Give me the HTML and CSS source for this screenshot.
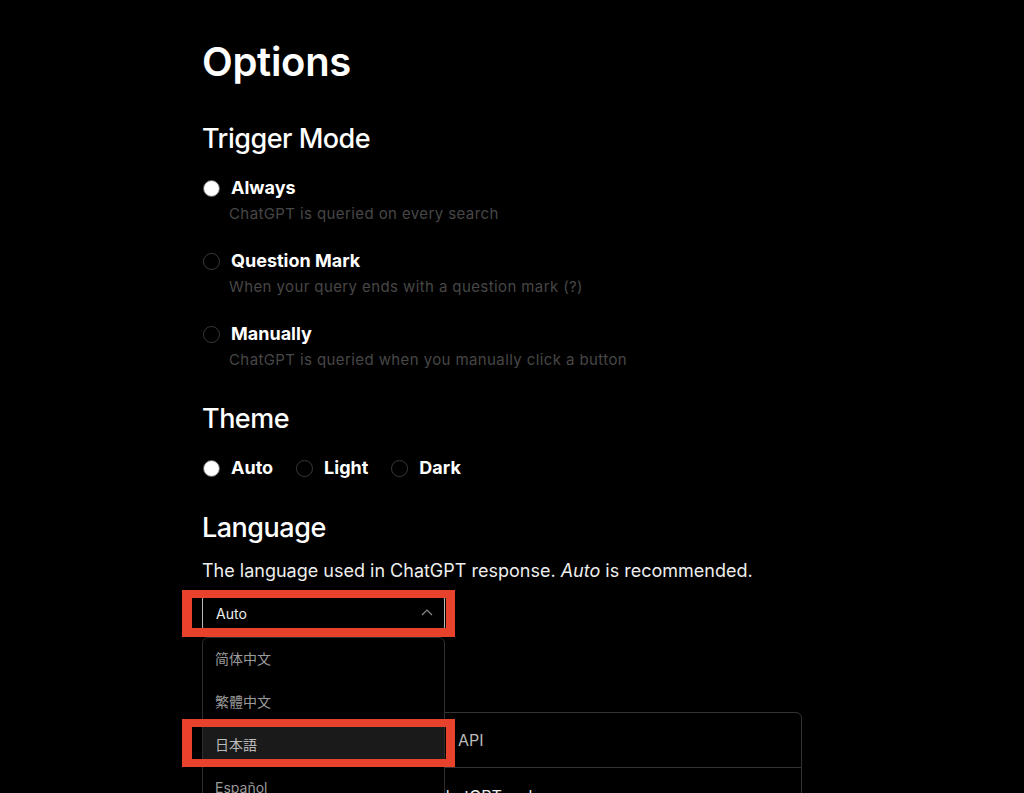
FILE: index.html
```html
<!DOCTYPE html>
<html>
<head>
    <title>Options</title>
    <link rel="stylesheet" href="styles.css">
</head>
<body>
    <div class="container">
        <h1>Options</h1>

        <h2>Trigger Mode</h2>
        <div class="option-list">
            <div class="option">
                <label class="radio"><span class="dot checked"></span>Always</label>
                <p class="hint">ChatGPT is queried on every search</p>
            </div>
            <div class="option">
                <label class="radio"><span class="dot"></span>Question Mark</label>
                <p class="hint">When your query ends with a question mark (?)</p>
            </div>
            <div class="option">
                <label class="radio"><span class="dot"></span>Manually</label>
                <p class="hint">ChatGPT is queried when you manually click a button</p>
            </div>
        </div>

        <h2>Theme</h2>
        <div class="theme-row">
            <label class="radio"><span class="dot checked"></span>Auto</label>
            <label class="radio"><span class="dot"></span>Light</label>
            <label class="radio"><span class="dot"></span>Dark</label>
        </div>

        <h2>Language</h2>
        <p class="lead">The language used in ChatGPT response. <i>Auto</i> is recommended.</p>

        <div class="select-wrap">
            <div class="select">
                <span>Auto</span>
                <svg class="chevron" width="14" height="14" viewBox="0 0 14 14">
                    <path d="M2 9 L7 4 L12 9" fill="none" stroke="#8a8a8a" stroke-width="1.2"/>
                </svg>
            </div>
            <div class="mark mark-select"></div>
            <ul class="dropdown">
                <li>简体中文</li>
                <li>繁體中文</li>
                <li class="active">日本語</li>
                <li>Español</li>
                <li>Français</li>
            </ul>
            <div class="mark mark-item"></div>
        </div>

        <div class="card">
            <div class="card-tabs">
                <span>ChatGPT webapp</span>
                <span>API</span>
            </div>
            <div class="card-row">
                <span class="card-key">Provider</span>
                <span>ChatGPT webapp</span>
            </div>
        </div>
    </div>
</body>
</html>
```

FILE: styles.css
```css
body {
    margin: 0;
    background-color: #000;
    color: #fff;
    font-family: 'Inter', 'Noto Sans CJK JP', sans-serif;
    overflow: hidden;
}
.container {
    width: 600px;
    margin-left: 202px;
    padding-top: 38px;
}
h1 {
    font-size: 40px;
    line-height: 48px;
    font-weight: 600;
    margin: 0 0 36px 0;
    letter-spacing: -0.3px;
}
h2 {
    font-size: 27px;
    line-height: 34px;
    font-weight: 500;
    margin: 0 0 20px 0;
    letter-spacing: -0.5px;
}
.option-list {
    display: flex;
    flex-direction: column;
    gap: 25px;
    margin-bottom: 32px;
}
.option {
    display: flex;
    flex-direction: column;
    gap: 4px;
}
.radio {
    display: flex;
    align-items: center;
    gap: 11px;
    font-size: 18px;
    line-height: 24px;
    font-weight: 700;
    padding-left: 1px;
}
.dot {
    width: 15px;
    height: 15px;
    border: 1px solid #3a3a3a;
    border-radius: 50%;
    box-sizing: content-box;
}
.dot.checked {
    background-color: #fff;
    border-color: #555;
}
.hint {
    margin: 0;
    padding-left: 27px;
    font-size: 15px;
    line-height: 20px;
    letter-spacing: 0.4px;
    color: #474747;
}
.theme-row {
    display: flex;
    gap: 22px;
    margin-bottom: 31px;
}
.lead {
    margin: -6px 0 13px 0;
    font-size: 18px;
    line-height: 24px;
    color: #eee;
}
.select-wrap {
    position: relative;
    width: 243px;
}
.select {
    height: 34px;
    box-sizing: border-box;
    border: 1px solid #bbb;
    border-radius: 3px;
    display: flex;
    align-items: center;
    justify-content: space-between;
    padding: 0 10px 0 13px;
    font-size: 14px;
    color: #eee;
}
.dropdown {
    position: absolute;
    top: 41px;
    left: 0;
    width: 243px;
    box-sizing: border-box;
    margin: 0;
    padding: 0;
    list-style: none;
    border: 1px solid #2e2e2e;
    border-radius: 6px;
    background-color: #000;
    z-index: 2;
}
.dropdown li {
    height: 43px;
    box-sizing: border-box;
    display: flex;
    align-items: center;
    padding: 0 0 3px 12px;
    font-size: 14px;
    color: #9a9a9a;
}
.dropdown li.active {
    background-color: #1a1a1a;
    color: #bbb;
}
.mark {
    position: absolute;
    left: -20px;
    width: 254px;
    height: 32px;
    border-style: solid;
    border-color: #e8412c;
    border-width: 8px 9px 8px 10px;
    z-index: 3;
}
.mark-select {
    top: -6px;
    height: 30px;
    border-bottom-width: 9px;
}
.mark-item {
    top: 123px;
}
.card {
    margin-top: 82px;
    border: 1px solid #333;
    border-radius: 6px;
}
.card-tabs {
    height: 54px;
    display: flex;
    align-items: center;
    gap: 106px;
    padding-left: 16px;
    font-size: 16px;
    color: #bbb;
    border-bottom: 1px solid #333;
}
.card-row {
    display: flex;
    padding: 18px 16px 12px 16px;
    font-size: 16px;
    color: #eee;
}
.card-key {
    width: 215px;
}
```
